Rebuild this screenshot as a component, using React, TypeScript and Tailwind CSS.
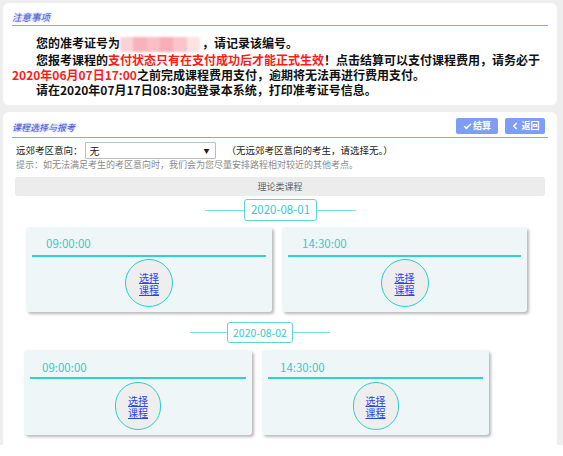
import { Check, ChevronLeft } from "lucide-react";

const font = "font-['Noto_Sans_CJK_SC',sans-serif]";

interface SlotProps {
  time: string;
  width: string;
  compact?: boolean;
}

// one exam session card: time, teal rule, round "选择课程" button
function Slot({ time, width, compact }: SlotProps) {
  return (
    <div className={`${width} h-[85px] shrink-0 rounded-[3px] bg-[#eef6f8] shadow-[2px_2px_3px_rgba(0,0,0,0.28)]`}>
      <div className={`${compact ? "pt-[10px] pl-[18px]" : "pt-[9px] pl-[20px]"} text-[11.5px] leading-[14px] text-[#36c9cb]`}>
        {time}
      </div>
      <div className={`${compact ? "mt-[3px]" : "mt-[5px]"} mx-[6px] h-[2px] bg-[#2fd0d0]`} />
      <div className="flex justify-center">
        <div
          className={`${compact ? "mt-[3px] w-[46px] h-[48px]" : "mt-[2px] w-[48px] h-[48px]"} rounded-full border-[1.5px] border-[#2ccccc] bg-[#eeeeee] flex flex-col items-center justify-center gap-[1px] text-[10px] leading-[11px] text-[#2b46e8]`}
        >
          <span className="underline">选择</span>
          <span className="underline">课程</span>
        </div>
      </div>
    </div>
  );
}

function DateTag({ label, offset, box, side }: { label: string; offset: string; box: string; side: string }) {
  return (
    <div className={`flex items-center ${offset}`}>
      <div className={`${side} h-px bg-[#7ee0e0]`} />
      <div className={`${box} rounded-[3px] border border-[#5fd6d6] bg-white flex items-center justify-center text-[#3cc9c9]`}>
        {label}
      </div>
      <div className={`${side} h-px bg-[#7ee0e0]`} />
    </div>
  );
}

export default function App() {
  return (
    <div className={`${font} w-[563px] h-[445px] overflow-hidden bg-[#eeeeee] pl-[3px] pr-[6px] pt-[3px]`}>
      {/* notice panel */}
      <div className="h-[102px] rounded-[6px] bg-white px-[9px] pt-[8px]">
        <div className="pb-[2px] border-b-[1.5px] border-[#86a6f3] text-[9.5px] leading-[12px] italic text-[#4a5bd0] [text-shadow:0_0_3px_#8e9cf5]">
          注意事项
        </div>
        <div className="mt-[9px] text-[12px] leading-[15px] font-bold text-[#111] whitespace-nowrap">
          <p className="indent-[24px]">
            您的准考证号为
            <span className="inline-flex align-middle mr-[2px] w-[80px] h-[15px] rounded-[3px] overflow-hidden blur-[1px]">
              <span className="flex-1 bg-[#fbd3d7]" />
              <span className="flex-1 bg-[#f8b3ba]" />
              <span className="flex-1 bg-[#fabfc5]" />
              <span className="flex-1 bg-[#f7aeb6]" />
              <span className="flex-1 bg-[#f9c4ca]" />
              <span className="flex-1 bg-[#fde1e3]" />
            </span>
            ，请记录该编号。
          </p>
          <p className="indent-[24px]">
            您报考课程的<span className="text-[#ff1a1a]">支付状态只有在支付成功后才能正式生效</span>！点击结算可以支付课程费用，请务必于
          </p>
          <p>
            <span className="text-[#ff1a1a]">2020年06月07日17:00</span>之前完成课程费用支付，逾期将无法再进行费用支付。
          </p>
          <p className="indent-[24px]">请在2020年07月17日08:30起登录本系统，打印准考证号信息。</p>
        </div>
      </div>

      {/* course panel */}
      <div className="mt-[7px] h-[400px] rounded-[6px] bg-white">
        <div className="mx-[9px] pt-[6px] pb-[3px] flex items-end justify-between border-b-[1.5px] border-[#86a6f3]">
          <div className="text-[9px] leading-[12px] italic text-[#4a5bd0] [text-shadow:0_0_3px_#8e9cf5]">
            课程选择与报考
          </div>
          <div className="flex gap-[7px] mr-[3px]">
            <div className="w-[42px] h-[16px] rounded-[2px] bg-[#7d9ef4] text-white text-[9px] font-bold flex items-center justify-center gap-[1px]">
              <Check size={9} strokeWidth={4} />
              结算
            </div>
            <div className="w-[40px] h-[16px] rounded-[2px] bg-[#7d9ef4] text-white text-[9px] font-bold flex items-center justify-center gap-[1px]">
              <ChevronLeft size={10} strokeWidth={4} />
              返回
            </div>
          </div>
        </div>

        <div className="px-[12px]">
          <div className="mt-[4px] flex items-center text-[9.5px] text-[#222]">
            <span className="ml-[1px]">远郊考区意向：</span>
            <div className="ml-[2px] w-[131px] h-[17px] border border-[#bdbdbd] rounded-[1px] flex items-center justify-between pl-[4px] pr-[5px] text-[10px]">
              <span>无</span>
              <span className="text-[6px]">▼</span>
            </div>
            <span className="ml-[11px]">（无远郊考区意向的考生，请选择无。）</span>
          </div>
          <div className="ml-[1px] text-[9px] leading-[11px] text-[#8a8a8a]">
            提示：如无法满足考生的考区意向时，我们会为您尽量安排路程相对较近的其他考点。
          </div>

          <div className="mt-[7px] w-[530px] h-[19px] rounded-[2px] bg-[#ececec] flex items-center justify-center text-[9px] text-[#666]">
            理论类课程
          </div>

          <div className="mt-[3px]">
            <DateTag label="2020-08-01" offset="ml-[190px]" box="w-[73px] h-[22px] text-[11.5px]" side="w-[39px]" />
          </div>
          <div className="mt-[6px] ml-[11px] flex gap-[10px]">
            <Slot time="09:00:00" width="w-[246px]" />
            <Slot time="14:30:00" width="w-[245px]" />
          </div>

          <div className="mt-[10px]">
            <DateTag label="2020-08-02" offset="ml-[175px]" box="w-[66px] h-[21px] text-[10.5px]" side="w-[37px]" />
          </div>
          <div className="mt-[7px] ml-[9px] flex gap-[10px]">
            <Slot time="09:00:00" width="w-[228px]" compact />
            <Slot time="14:30:00" width="w-[227px]" compact />
          </div>
        </div>
      </div>
    </div>
  );
}
